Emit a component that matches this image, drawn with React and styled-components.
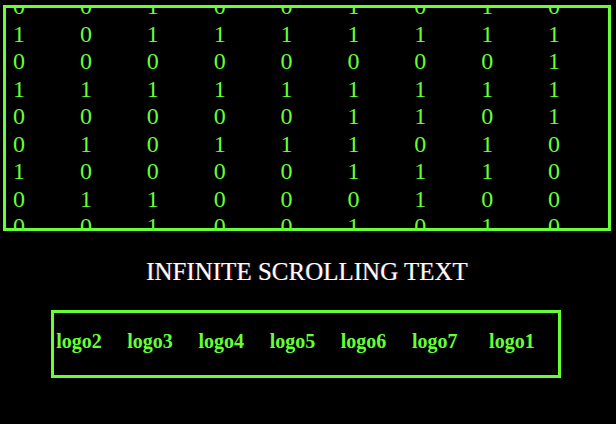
import React from "react";
import styled, { createGlobalStyle } from "styled-components";

const GREEN = "#66ff33";

const Global = createGlobalStyle`
  html, body { margin: 0; padding: 0; background: #000; }
  body { font-family: "Liberation Serif", "Times New Roman", serif; }
`;

const Page = styled.div`
  background: #000;
  min-height: 100vh;
  padding: 5px 5px 0 3px;
  box-sizing: border-box;
  display: flex;
  flex-direction: column;
`;

const MatrixBox = styled.div`
  width: 608px;
  height: 226px;
  box-sizing: border-box;
  border: 3px solid ${GREEN};
  overflow: hidden;
`;

const MatrixGrid = styled.div`
  display: grid;
  grid-template-columns: repeat(9, 66.875px);
  padding-left: 7px;
  margin-top: ${(p) => p.$offset}px;
`;

const Column = styled.div`
  display: flex;
  flex-direction: column;
`;

const Digit = styled.span`
  font-family: "Liberation Serif", "Times New Roman", serif;
  font-size: 24px;
  line-height: 27.5px;
  height: 27.5px;
  color: ${GREEN};
`;

const Title = styled.h1`
  margin: 27px 0 0;
  width: 608px;
  text-align: center;
  font-family: "Liberation Serif", "Times New Roman", serif;
  font-weight: normal;
  font-size: 25px;
  line-height: 28px;
  color: #fff;
  text-shadow: -0.6px 0 rgba(80, 200, 255, 0.45), 0.6px 0 rgba(255, 40, 40, 0.45);
`;

const LogoBox = styled.div`
  margin: 24px 0 0 48px;
  width: 510px;
  height: 68px;
  box-sizing: border-box;
  border: 3px solid ${GREEN};
  overflow: hidden;
  padding-top: 17px;
`;

const Track = styled.div`
  display: flex;
  gap: 31.6px;
  margin-left: ${(p) => p.$shift}px;
  width: max-content;
`;

const Group = styled.div`
  display: flex;
  gap: 25.6px;
`;

const Logo = styled.span`
  font-family: "Liberation Serif", "Times New Roman", serif;
  font-weight: bold;
  font-size: 20px;
  line-height: 23px;
  color: ${GREEN};
  white-space: nowrap;
`;

const columns = [
  [0, 1, 0, 1, 0, 0, 1, 0, 0],
  [0, 0, 0, 1, 0, 1, 0, 1, 0],
  [1, 1, 0, 1, 0, 0, 0, 1, 1],
  [0, 1, 0, 1, 0, 1, 0, 0, 0],
  [0, 1, 0, 1, 0, 1, 0, 0, 0],
  [1, 1, 0, 1, 1, 1, 1, 0, 1],
  [0, 1, 0, 1, 1, 0, 1, 1, 0],
  [1, 1, 0, 1, 0, 1, 1, 0, 1],
  [0, 1, 1, 1, 1, 0, 0, 0, 0],
];

const logos = ["logo1", "logo2", "logo3", "logo4", "logo5", "logo6", "logo7"];

export default function App() {
  return (
    <>
      <Global />
      <Page>
        <MatrixBox>
          <MatrixGrid $offset={-15}>
            {columns.map((col, ci) => (
              <Column key={ci}>
                {col.map((d, ri) => (
                  <Digit key={ri}>{d}</Digit>
                ))}
              </Column>
            ))}
          </MatrixGrid>
        </MatrixBox>
        <Title>INFINITE SCROLLING TEXT</Title>
        <LogoBox>
          <Track $shift={-69}>
            {[0, 1].map((g) => (
              <Group key={g}>
                {logos.map((l) => (
                  <Logo key={l}>{l}</Logo>
                ))}
              </Group>
            ))}
          </Track>
        </LogoBox>
      </Page>
    </>
  );
}
